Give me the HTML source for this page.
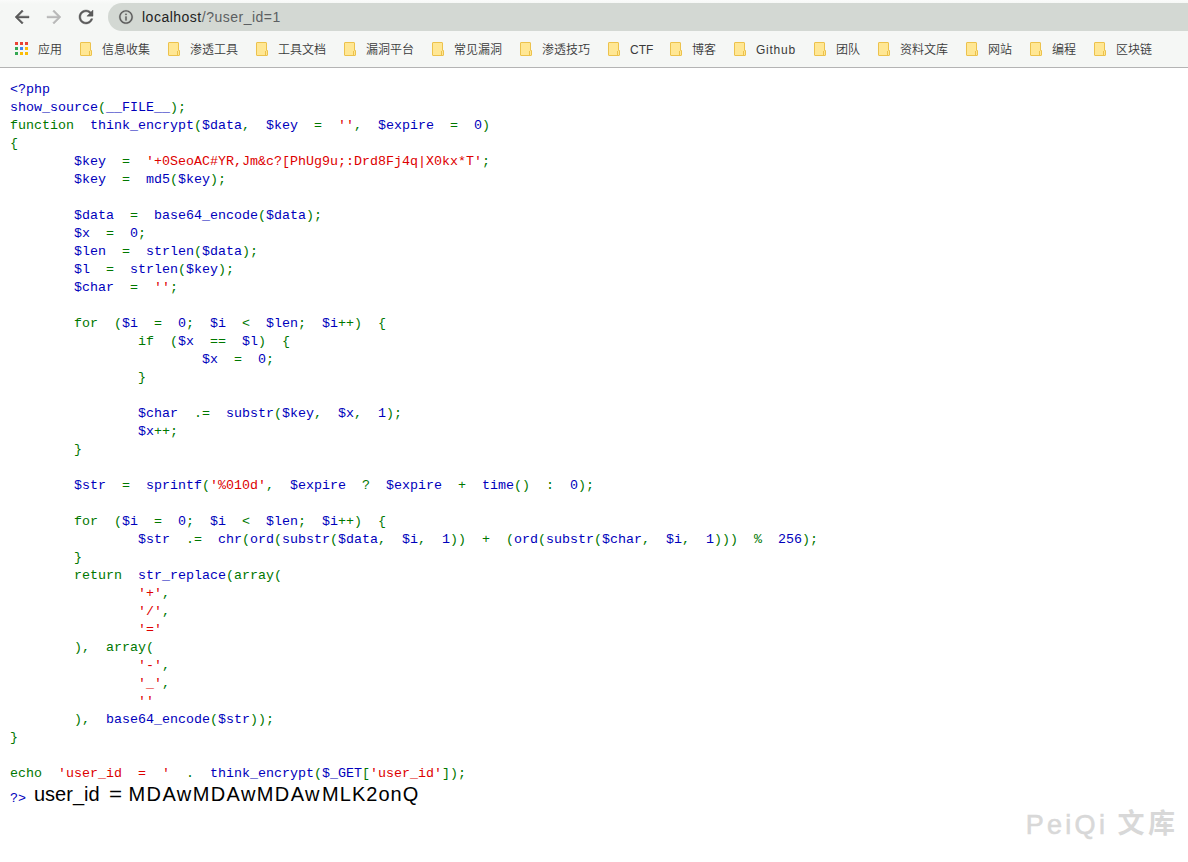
<!DOCTYPE html>
<html lang="zh-CN">
<head>
<meta charset="utf-8">
<title>localhost/?user_id=1</title>
<style>
html,body{margin:0;padding:0;}
body{width:1188px;height:862px;overflow:hidden;background:#fff;position:relative;font-family:"Liberation Sans","Noto Sans CJK SC",sans-serif;}
#chrome{position:absolute;left:0;top:0;width:1188px;height:67px;overflow:hidden;background:linear-gradient(#fafbfa,#f5f7f5 4px,#f5f7f5);border-bottom:1px solid #b4b4b4;}
#omni{position:absolute;left:108px;top:3px;width:1100px;height:28px;border-radius:14px;background:#d3d8d3;}
#url{position:absolute;left:142px;top:8px;font-size:14px;line-height:18px;color:#222;white-space:pre;letter-spacing:0.5px;}
#url .p{color:#5c5f62;}
.ic{position:absolute;}
.bm{position:absolute;top:42px;height:16px;line-height:16px;font-size:12px;color:#3a3a3a;white-space:pre;font-weight:350;}
.fd{position:absolute;top:42px;width:12px;height:14px;}
#code{position:absolute;left:10px;top:81px;font-family:"Liberation Mono","Noto Sans CJK SC",monospace;font-size:13.333px;line-height:18px;white-space:pre;word-spacing:8px;margin:0;color:#000;}
#code .b{color:#0000bb;}
#code .g{color:#007700;}
#code .r{color:#dd0000;}
#out{position:absolute;left:0;top:781px;font-size:20px;line-height:26px;color:#000;white-space:pre;}
#out span{position:absolute;top:0;}
#wm{position:absolute;left:0;top:0;color:#d8d8d8;white-space:pre;}
#wm span{position:absolute;white-space:pre;}
</style>
</head>
<body>
<div id="chrome">
  <div id="omni"></div>

  <svg class="ic" style="left:0;top:0" width="140" height="34" viewBox="0 0 140 34">
    <path transform="translate(11.5 6.5) scale(0.875)" fill="#5a5a5a" stroke="#5a5a5a" stroke-width="0.5" d="M20 11H7.83l5.59-5.59L12 4l-8 8 8 8 1.41-1.41L7.83 13H20v-2z"/>
    <path transform="translate(43.5 6.5) scale(0.875)" fill="#b8b8b8" stroke="#b8b8b8" stroke-width="0.5" d="M12 4l-1.41 1.41L16.17 11H4v2h12.17l-5.58 5.59L12 20l8-8z"/>
    <path transform="translate(75.5 6.5) scale(0.875)" fill="#5a5a5a" stroke="#5a5a5a" stroke-width="0.5" d="M17.65 6.35C16.2 4.9 14.21 4 12 4c-4.42 0-7.99 3.58-7.99 8s3.57 8 7.99 8c3.73 0 6.84-2.55 7.73-6h-2.08c-.82 2.33-3.04 4-5.65 4-3.31 0-6-2.69-6-6s2.69-6 6-6c1.66 0 3.14.69 4.22 1.78L13 11h7V4l-2.35 2.35z"/>
    <path transform="translate(117.84 8.9) scale(0.68)" fill="#5a5a5a" stroke="#5a5a5a" stroke-width="0.3" d="M11 17h2v-6h-2v6zm1-15C6.48 2 2 6.48 2 12s4.48 10 10 10 10-4.48 10-10S17.52 2 12 2zm0 18c-4.41 0-8-3.59-8-8s3.590-8 8-8 8 3.590 8 8-3.590 8-8 8zM11 9h2V7h-2v2z"/>
  </svg>
  <svg class="ic" style="left:15px;top:42px" width="13" height="13" viewBox="0 0 13 13">
    <rect x="0" y="0" width="3" height="3" fill="#ea4335"/><rect x="5" y="0" width="3" height="3" fill="#ea4335"/><rect x="10" y="0" width="3" height="3" fill="#ea4335"/>
    <rect x="0" y="5" width="3" height="3" fill="#34a853"/><rect x="5" y="5" width="3" height="3" fill="#4285f4"/><rect x="10" y="5" width="3" height="3" fill="#fbbc05"/>
    <rect x="0" y="10" width="3" height="3" fill="#34a853"/><rect x="5" y="10" width="3" height="3" fill="#fbbc05"/><rect x="10" y="10" width="3" height="3" fill="#fbbc05"/>
  </svg>
  <div class="bm" style="left:38px">应用</div>
  <svg class="fd" style="left:80px" viewBox="0 0 12 14"><path d="M0.5 1 Q0.5 0.5 1 0.5 H10 Q10.5 0.5 10.5 1 V8.5 H11.5 V13 Q11.5 13.5 11 13.5 H1 Q0.5 13.5 0.5 13 Z" fill="#ffe794" stroke="#ecc24c" stroke-width="1"/><path d="M9.5 9 V13" stroke="#ecc24c" stroke-width="1" fill="none"/></svg>
  <div class="bm" style="left:102px">信息收集</div>
  <svg class="fd" style="left:168px" viewBox="0 0 12 14"><path d="M0.5 1 Q0.5 0.5 1 0.5 H10 Q10.5 0.5 10.5 1 V8.5 H11.5 V13 Q11.5 13.5 11 13.5 H1 Q0.5 13.5 0.5 13 Z" fill="#ffe794" stroke="#ecc24c" stroke-width="1"/><path d="M9.5 9 V13" stroke="#ecc24c" stroke-width="1" fill="none"/></svg>
  <div class="bm" style="left:190px">渗透工具</div>
  <svg class="fd" style="left:256px" viewBox="0 0 12 14"><path d="M0.5 1 Q0.5 0.5 1 0.5 H10 Q10.5 0.5 10.5 1 V8.5 H11.5 V13 Q11.5 13.5 11 13.5 H1 Q0.5 13.5 0.5 13 Z" fill="#ffe794" stroke="#ecc24c" stroke-width="1"/><path d="M9.5 9 V13" stroke="#ecc24c" stroke-width="1" fill="none"/></svg>
  <div class="bm" style="left:278px">工具文档</div>
  <svg class="fd" style="left:344px" viewBox="0 0 12 14"><path d="M0.5 1 Q0.5 0.5 1 0.5 H10 Q10.5 0.5 10.5 1 V8.5 H11.5 V13 Q11.5 13.5 11 13.5 H1 Q0.5 13.5 0.5 13 Z" fill="#ffe794" stroke="#ecc24c" stroke-width="1"/><path d="M9.5 9 V13" stroke="#ecc24c" stroke-width="1" fill="none"/></svg>
  <div class="bm" style="left:366px">漏洞平台</div>
  <svg class="fd" style="left:432px" viewBox="0 0 12 14"><path d="M0.5 1 Q0.5 0.5 1 0.5 H10 Q10.5 0.5 10.5 1 V8.5 H11.5 V13 Q11.5 13.5 11 13.5 H1 Q0.5 13.5 0.5 13 Z" fill="#ffe794" stroke="#ecc24c" stroke-width="1"/><path d="M9.5 9 V13" stroke="#ecc24c" stroke-width="1" fill="none"/></svg>
  <div class="bm" style="left:454px">常见漏洞</div>
  <svg class="fd" style="left:520px" viewBox="0 0 12 14"><path d="M0.5 1 Q0.5 0.5 1 0.5 H10 Q10.5 0.5 10.5 1 V8.5 H11.5 V13 Q11.5 13.5 11 13.5 H1 Q0.5 13.5 0.5 13 Z" fill="#ffe794" stroke="#ecc24c" stroke-width="1"/><path d="M9.5 9 V13" stroke="#ecc24c" stroke-width="1" fill="none"/></svg>
  <div class="bm" style="left:542px">渗透技巧</div>
  <svg class="fd" style="left:608px" viewBox="0 0 12 14"><path d="M0.5 1 Q0.5 0.5 1 0.5 H10 Q10.5 0.5 10.5 1 V8.5 H11.5 V13 Q11.5 13.5 11 13.5 H1 Q0.5 13.5 0.5 13 Z" fill="#ffe794" stroke="#ecc24c" stroke-width="1"/><path d="M9.5 9 V13" stroke="#ecc24c" stroke-width="1" fill="none"/></svg>
  <div class="bm" style="left:630px">CTF</div>
  <svg class="fd" style="left:670px" viewBox="0 0 12 14"><path d="M0.5 1 Q0.5 0.5 1 0.5 H10 Q10.5 0.5 10.5 1 V8.5 H11.5 V13 Q11.5 13.5 11 13.5 H1 Q0.5 13.5 0.5 13 Z" fill="#ffe794" stroke="#ecc24c" stroke-width="1"/><path d="M9.5 9 V13" stroke="#ecc24c" stroke-width="1" fill="none"/></svg>
  <div class="bm" style="left:692px">博客</div>
  <svg class="fd" style="left:734px" viewBox="0 0 12 14"><path d="M0.5 1 Q0.5 0.5 1 0.5 H10 Q10.5 0.5 10.5 1 V8.5 H11.5 V13 Q11.5 13.5 11 13.5 H1 Q0.5 13.5 0.5 13 Z" fill="#ffe794" stroke="#ecc24c" stroke-width="1"/><path d="M9.5 9 V13" stroke="#ecc24c" stroke-width="1" fill="none"/></svg>
  <div class="bm" style="left:756px;letter-spacing:0.75px">Github</div>
  <svg class="fd" style="left:814px" viewBox="0 0 12 14"><path d="M0.5 1 Q0.5 0.5 1 0.5 H10 Q10.5 0.5 10.5 1 V8.5 H11.5 V13 Q11.5 13.5 11 13.5 H1 Q0.5 13.5 0.5 13 Z" fill="#ffe794" stroke="#ecc24c" stroke-width="1"/><path d="M9.5 9 V13" stroke="#ecc24c" stroke-width="1" fill="none"/></svg>
  <div class="bm" style="left:836px">团队</div>
  <svg class="fd" style="left:878px" viewBox="0 0 12 14"><path d="M0.5 1 Q0.5 0.5 1 0.5 H10 Q10.5 0.5 10.5 1 V8.5 H11.5 V13 Q11.5 13.5 11 13.5 H1 Q0.5 13.5 0.5 13 Z" fill="#ffe794" stroke="#ecc24c" stroke-width="1"/><path d="M9.5 9 V13" stroke="#ecc24c" stroke-width="1" fill="none"/></svg>
  <div class="bm" style="left:900px">资料文库</div>
  <svg class="fd" style="left:966px" viewBox="0 0 12 14"><path d="M0.5 1 Q0.5 0.5 1 0.5 H10 Q10.5 0.5 10.5 1 V8.5 H11.5 V13 Q11.5 13.5 11 13.5 H1 Q0.5 13.5 0.5 13 Z" fill="#ffe794" stroke="#ecc24c" stroke-width="1"/><path d="M9.5 9 V13" stroke="#ecc24c" stroke-width="1" fill="none"/></svg>
  <div class="bm" style="left:988px">网站</div>
  <svg class="fd" style="left:1030px" viewBox="0 0 12 14"><path d="M0.5 1 Q0.5 0.5 1 0.5 H10 Q10.5 0.5 10.5 1 V8.5 H11.5 V13 Q11.5 13.5 11 13.5 H1 Q0.5 13.5 0.5 13 Z" fill="#ffe794" stroke="#ecc24c" stroke-width="1"/><path d="M9.5 9 V13" stroke="#ecc24c" stroke-width="1" fill="none"/></svg>
  <div class="bm" style="left:1052px">编程</div>
  <svg class="fd" style="left:1094px" viewBox="0 0 12 14"><path d="M0.5 1 Q0.5 0.5 1 0.5 H10 Q10.5 0.5 10.5 1 V8.5 H11.5 V13 Q11.5 13.5 11 13.5 H1 Q0.5 13.5 0.5 13 Z" fill="#ffe794" stroke="#ecc24c" stroke-width="1"/><path d="M9.5 9 V13" stroke="#ecc24c" stroke-width="1" fill="none"/></svg>
  <div class="bm" style="left:1116px">区块链</div>
  <div id="url">localhost<span class="p">/?user_id=1</span></div>
</div>
<pre id="code"><span class="b">&lt;?php
show_source</span><span class="g">(</span><span class="b">__FILE__</span><span class="g">);
function </span><span class="b">think_encrypt</span><span class="g">(</span><span class="b">$data</span><span class="g">, </span><span class="b">$key </span><span class="g">= </span><span class="r">''</span><span class="g">, </span><span class="b">$expire </span><span class="g">= </span><span class="b">0</span><span class="g">)
{
    </span><span class="b">$key </span><span class="g">= </span><span class="r">'+0SeoAC#YR,Jm&amp;c?[PhUg9u;:Drd8Fj4q|X0kx*T'</span><span class="g">;
    </span><span class="b">$key </span><span class="g">= </span><span class="b">md5</span><span class="g">(</span><span class="b">$key</span><span class="g">);

    </span><span class="b">$data </span><span class="g">= </span><span class="b">base64_encode</span><span class="g">(</span><span class="b">$data</span><span class="g">);
    </span><span class="b">$x </span><span class="g">= </span><span class="b">0</span><span class="g">;
    </span><span class="b">$len </span><span class="g">= </span><span class="b">strlen</span><span class="g">(</span><span class="b">$data</span><span class="g">);
    </span><span class="b">$l </span><span class="g">= </span><span class="b">strlen</span><span class="g">(</span><span class="b">$key</span><span class="g">);
    </span><span class="b">$char </span><span class="g">= </span><span class="r">''</span><span class="g">;

    for (</span><span class="b">$i </span><span class="g">= </span><span class="b">0</span><span class="g">; </span><span class="b">$i </span><span class="g">&lt; </span><span class="b">$len</span><span class="g">; </span><span class="b">$i</span><span class="g">++) {
        if (</span><span class="b">$x </span><span class="g">== </span><span class="b">$l</span><span class="g">) {
            </span><span class="b">$x </span><span class="g">= </span><span class="b">0</span><span class="g">;
        }

        </span><span class="b">$char </span><span class="g">.= </span><span class="b">substr</span><span class="g">(</span><span class="b">$key</span><span class="g">, </span><span class="b">$x</span><span class="g">, </span><span class="b">1</span><span class="g">);
        </span><span class="b">$x</span><span class="g">++;
    }

    </span><span class="b">$str </span><span class="g">= </span><span class="b">sprintf</span><span class="g">(</span><span class="r">'%010d'</span><span class="g">, </span><span class="b">$expire </span><span class="g">? </span><span class="b">$expire </span><span class="g">+ </span><span class="b">time</span><span class="g">() : </span><span class="b">0</span><span class="g">);

    for (</span><span class="b">$i </span><span class="g">= </span><span class="b">0</span><span class="g">; </span><span class="b">$i </span><span class="g">&lt; </span><span class="b">$len</span><span class="g">; </span><span class="b">$i</span><span class="g">++) {
        </span><span class="b">$str </span><span class="g">.= </span><span class="b">chr</span><span class="g">(</span><span class="b">ord</span><span class="g">(</span><span class="b">substr</span><span class="g">(</span><span class="b">$data</span><span class="g">, </span><span class="b">$i</span><span class="g">, </span><span class="b">1</span><span class="g">)) + (</span><span class="b">ord</span><span class="g">(</span><span class="b">substr</span><span class="g">(</span><span class="b">$char</span><span class="g">, </span><span class="b">$i</span><span class="g">, </span><span class="b">1</span><span class="g">))) % </span><span class="b">256</span><span class="g">);
    }
    return </span><span class="b">str_replace</span><span class="g">(array(
        </span><span class="r">'+'</span><span class="g">,
        </span><span class="r">'/'</span><span class="g">,
        </span><span class="r">'='
</span><span class="g">    ), array(
        </span><span class="r">'-'</span><span class="g">,
        </span><span class="r">'_'</span><span class="g">,
        </span><span class="r">''
</span><span class="g">    ), </span><span class="b">base64_encode</span><span class="g">(</span><span class="b">$str</span><span class="g">));
}

echo </span><span class="r">'user_id = ' </span><span class="g">. </span><span class="b">think_encrypt</span><span class="g">(</span><span class="b">$_GET</span><span class="g">[</span><span class="r">'user_id'</span><span class="g">]);
</span><span class="b" style="position:relative;top:7px">?&gt;</span></pre>
<div id="out"><span style="left:34px">user_id</span><span style="left:109px;transform-origin:0 50%;transform:scaleX(1.12)">=</span><span style="left:128.5px;letter-spacing:1.4px">MDAwMDAwMDAw</span><span style="left:322px;letter-spacing:1.05px">MLK2onQ</span></div>
<div id="wm"><span style="left:1025.7px;top:806px;font-size:27px;line-height:38px;letter-spacing:3.3px;-webkit-text-stroke:0.6px #d8d8d8">PeiQi </span><span style="left:1117.5px;top:804.5px;font-size:27px;line-height:38px;letter-spacing:3.5px;font-weight:700">文库</span></div>
</body>
</html>
